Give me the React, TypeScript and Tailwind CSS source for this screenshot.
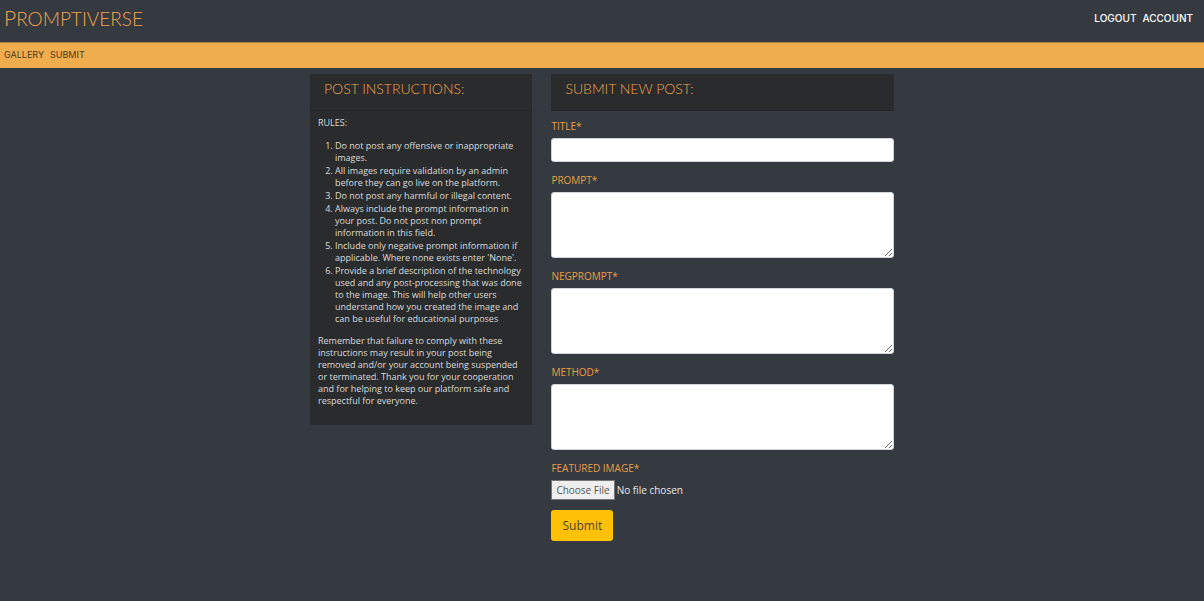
import React from 'react';

const rules = [
  'Do not post any offensive or inappropriate\nimages.',
  'All images require validation by an admin\nbefore they can go live on the platform.',
  'Do not post any harmful or illegal content.',
  'Always include the prompt information in\nyour post. Do not post non prompt\ninformation in this field.',
  "Include only negative prompt information if\napplicable. Where none exists enter 'None'.",
  'Provide a brief description of the technology\nused and any post-processing that was done\nto the image. This will help other users\nunderstand how you created the image and\ncan be useful for educational purposes',
];

const closingNote =
  'Remember that failure to comply with these\ninstructions may result in your post being\nremoved and/or your account being suspended\nor terminated. Thank you for your cooperation\nand for helping to keep our platform safe and\nrespectful for everyone.';

const labelClass = 'mb-1 block text-[10px] leading-4 text-[#eb9e45]';
const fieldClass =
  'block w-full rounded-[3px] border border-[#ced4da] bg-white px-2 text-[11px] text-[#495057] outline-none focus:border-[#f0ad4e]';

function PanelTitle({ children }: { children: React.ReactNode }) {
  return (
    <h2 className="h-[37px] border-b border-[#222425] bg-[#292b2c] px-3.5 pt-[7px] font-['Lato',sans-serif] text-[14px] leading-4 font-light text-[#f5a34a]">
      {children}
    </h2>
  );
}

function TextAreaField({ id, label }: { id: string; label: string }) {
  return (
    <div>
      <label htmlFor={id} className={labelClass}>
        {label}
      </label>
      <textarea id={id} name={id} required className={`${fieldClass} h-[66px] resize-y py-1`} />
    </div>
  );
}

export default function App() {
  return (
    <div className="min-h-screen bg-[#353a41] font-['Open_Sans',sans-serif]">
      <header className="flex h-[42px] items-center justify-between pr-[11px] pb-1.5 pl-1">
        <a href="#home" className="font-['Lato',sans-serif] text-[19px] leading-6 font-light text-[#f5a34a]">
          <span className="text-[21px]">P</span>ROMPTIVERSE
        </a>
        <nav aria-label="Account" className="flex gap-1.5 font-['Inter',sans-serif] text-[10px] leading-4 font-medium text-white">
          <a href="#logout">LOGOUT</a>
          <a href="#account">ACCOUNT</a>
        </nav>
      </header>
      <nav
        aria-label="Main"
        className="flex h-[26px] items-center gap-1.5 border-t border-[#b08343] bg-[#f0ad4e] px-1 pb-0.5 font-['Inter',sans-serif] text-[9px] text-[#4d3a1e]"
      >
        <a href="#gallery">GALLERY</a>
        <a href="#submit">SUBMIT</a>
      </nav>
      <main className="mx-auto mt-1.5 grid max-w-[584px] grid-cols-[222fr_342fr] items-start gap-x-[19px]">
        <section className="bg-[#292b2c]">
          <PanelTitle>POST INSTRUCTIONS:</PanelTitle>
          <div className="pt-1.5 pr-1 pb-[18px] pl-2 font-['Open_Sans',sans-serif] text-[9px] leading-3 font-medium text-[#dcdcdc]">
            <p className="mb-[11px]">RULES:</p>
            <ol className="mb-2.5 list-decimal space-y-px pl-[17px]">
              {rules.map((rule) => (
                <li key={rule} className="whitespace-pre-line">
                  {rule}
                </li>
              ))}
            </ol>
            <p className="whitespace-pre-line">{closingNote}</p>
          </div>
        </section>
        <section>
          <PanelTitle>SUBMIT NEW POST:</PanelTitle>
          <form className="mt-[7px] flex flex-col gap-2.5" onSubmit={(event) => event.preventDefault()}>
            <div>
              <label htmlFor="title" className={labelClass}>
                TITLE*
              </label>
              <input id="title" name="title" type="text" required className={`${fieldClass} h-6`} />
            </div>
            <TextAreaField id="prompt" label="PROMPT*" />
            <TextAreaField id="negprompt" label="NEGPROMPT*" />
            <TextAreaField id="method" label="METHOD*" />
            <div>
              <label htmlFor="image" className={labelClass}>
                FEATURED IMAGE*
              </label>
              <input
                id="image"
                name="image"
                type="file"
                className="block h-5 w-full text-[10px] leading-4 text-[#e9e9e9] file:mr-0.5 file:h-5 file:border file:border-solid file:border-[#767676] file:bg-[#efefef] file:px-1 file:text-[10px] file:text-[#555555]"
              />
            </div>
            <button type="submit" className="h-[31px] w-[62px] rounded-[3px] bg-[#ffc107] text-xs text-[#4b4130]">
              Submit
            </button>
          </form>
        </section>
      </main>
    </div>
  );
}
